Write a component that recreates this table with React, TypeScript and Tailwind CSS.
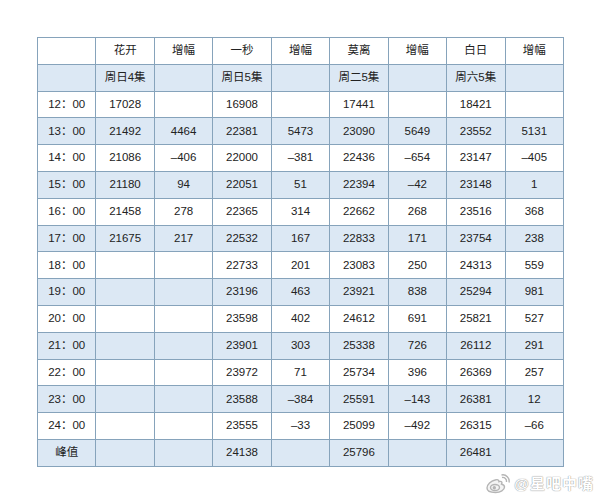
const font = "font-['Liberation_Sans','Noto_Sans_CJK_SC',sans-serif]"

const header = ["", "花开", "增幅", "一秒", "增幅", "莫离", "增幅", "白日", "增幅"]
const sub = ["", "周日4集", "", "周日5集", "", "周二5集", "", "周六5集", ""]

const rows: string[][] = [
  ["12：00", "17028", "", "16908", "", "17441", "", "18421", ""],
  ["13：00", "21492", "4464", "22381", "5473", "23090", "5649", "23552", "5131"],
  ["14：00", "21086", "–406", "22000", "–381", "22436", "–654", "23147", "–405"],
  ["15：00", "21180", "94", "22051", "51", "22394", "–42", "23148", "1"],
  ["16：00", "21458", "278", "22365", "314", "22662", "268", "23516", "368"],
  ["17：00", "21675", "217", "22532", "167", "22833", "171", "23754", "238"],
  ["18：00", "", "", "22733", "201", "23083", "250", "24313", "559"],
  ["19：00", "", "", "23196", "463", "23921", "838", "25294", "981"],
  ["20：00", "", "", "23598", "402", "24612", "691", "25821", "527"],
  ["21：00", "", "", "23901", "303", "25338", "726", "26112", "291"],
  ["22：00", "", "", "23972", "71", "25734", "396", "26369", "257"],
  ["23：00", "", "", "23588", "–384", "25591", "–143", "26381", "12"],
  ["24：00", "", "", "23555", "–33", "25099", "–492", "26315", "–66"],
  ["峰值", "", "", "24138", "", "25796", "", "26481", ""],
]

const all = [header, sub, ...rows]

function WeiboLogo() {
  return (
    <svg width="26" height="20" viewBox="0 0 26 20" fill="none" stroke="#b5b5b5" strokeWidth="1.4">
      <path d="M10 6c-4 1-8 4.5-8 8 0 3 4 4.5 8.5 4.5 5 0 9-2.5 9-5.5 0-2-2-2.5-3-2.8 1-1.8.3-3.5-2.5-2.5 0-2-1.5-2.5-4-1.7z" fill="#f4f4f4" />
      <ellipse cx="10" cy="13.5" rx="4.5" ry="3" />
      <circle cx="9.3" cy="13.8" r="1" fill="#b5b5b5" />
      <path d="M17 3.5c2.5-.5 5 1.5 4.5 4.5" />
      <path d="M16.5 1c4.5-1 8.5 3 7.5 7.5" />
    </svg>
  )
}

export default function App() {
  return (
    <div className={`w-[600px] h-[503px] bg-white relative ${font}`}>
      <div className="pt-[37px] pl-[37px]">
        <table className="w-[527px] border-collapse table-fixed">
          <tbody>
            {all.map((row, i) => (
              <tr key={i} className={i % 2 === 1 ? "bg-[#dce8f4]" : "bg-white"}>
                {row.map((cell, j) => (
                  <td
                    key={j}
                    className="h-[26.8px] p-0 border border-[#86a3bb] text-center text-[11.5px] leading-none text-[#222]"
                  >
                    {cell}
                  </td>
                ))}
              </tr>
            ))}
          </tbody>
        </table>
      </div>

      {/* watermark */}
      <div className="absolute right-[6px] bottom-[8px] flex items-center gap-[3px]">
        <WeiboLogo />
        <span className="text-[15px] text-white font-bold [text-shadow:0_0_1px_#999,0_0_1px_#999] tracking-[1px]">
          @星吧中嘴
        </span>
      </div>
    </div>
  )
}
